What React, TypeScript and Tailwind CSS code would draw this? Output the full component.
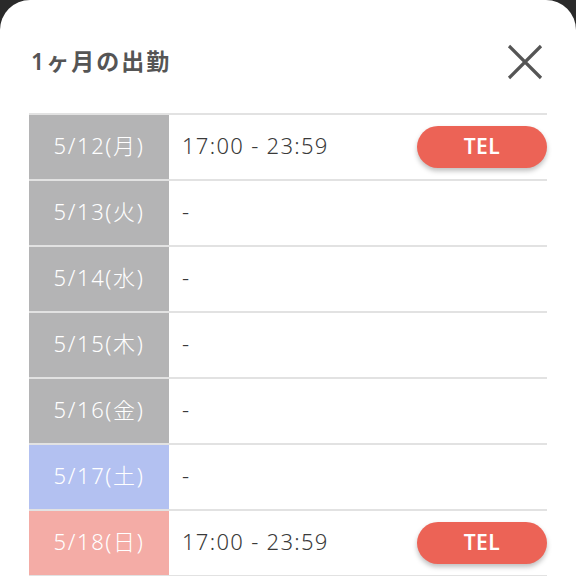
import React from "react";

type Day = { date: string; time: string; tel: boolean; tone: "gray" | "sat" | "sun" };

const days: Day[] = [
  { date: "5/12(月)", time: "17:00 - 23:59", tel: true, tone: "gray" },
  { date: "5/13(火)", time: "-", tel: false, tone: "gray" },
  { date: "5/14(水)", time: "-", tel: false, tone: "gray" },
  { date: "5/15(木)", time: "-", tel: false, tone: "gray" },
  { date: "5/16(金)", time: "-", tel: false, tone: "gray" },
  { date: "5/17(土)", time: "-", tel: false, tone: "sat" },
  { date: "5/18(日)", time: "17:00 - 23:59", tel: true, tone: "sun" },
];

const toneClass = {
  gray: "bg-[#b4b4b5]",
  sat: "bg-[#b3c1f1]",
  sun: "bg-[#f4aca6]",
};

export default function App() {
  return (
    <div
      className="w-[576px] h-[576px] overflow-hidden bg-[#2a2a2a]"
      style={{ fontFamily: '"Noto Sans", "Noto Sans CJK JP", sans-serif' }}
    >
      <div className="h-full bg-white rounded-t-[30px] px-[29px] pt-[39px]">
        <div className="flex items-center justify-between h-[46px] pl-[2px] pr-[4px]">
          <h1 className="text-[23px] font-semibold text-[#555] tracking-[2px] pb-[2px]">1ヶ月の出勤</h1>
          <svg width="36" height="36" viewBox="0 0 36 36" className="text-[#555]">
            <path d="M2 2 L34 34 M34 2 L2 34" stroke="currentColor" strokeWidth="3.2" fill="none" />
          </svg>
        </div>

        <div className="mt-[28px] border-t-2 border-[#e2e2e2]">
          {days.map((d) => (
            <div key={d.date} className="flex h-[66px] border-b-2 border-[#e2e2e2]">
              <div
                className={`w-[140px] shrink-0 flex items-center justify-center pb-[3px] text-white text-[22px] font-light tracking-[1.6px] ${toneClass[d.tone]}`}
              >
                {d.date}
              </div>
              <div className="flex-1 flex items-center justify-between pl-[13px] text-[22px] font-light text-[#3a3a3a] tracking-[1.3px]">
                <span className="pb-[3px]">{d.time}</span>
                {d.tel && (
                  <button className="w-[130px] h-[42px] rounded-full bg-[#ec6356] text-white text-[21px] font-semibold tracking-[0.5px] shadow-[0_3px_5px_rgba(0,0,0,0.25)]">
                    TEL
                  </button>
                )}
              </div>
            </div>
          ))}
        </div>
      </div>
    </div>
  );
}
